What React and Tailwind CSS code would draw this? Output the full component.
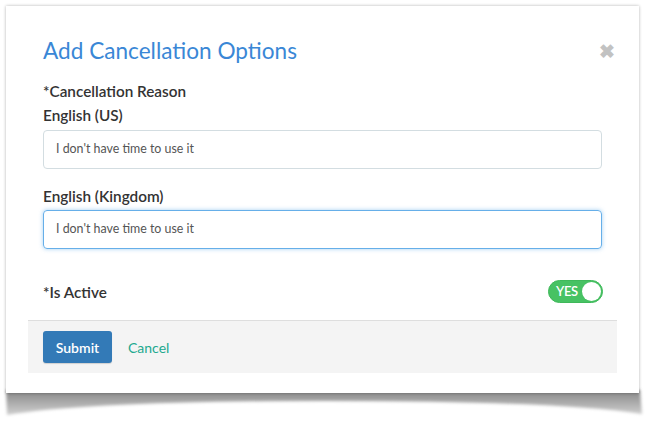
import React from "react";

function CurlShadow() {
  return (
    <svg
      className="absolute left-0 top-[380px] pointer-events-none"
      width="653"
      height="43"
      viewBox="0 0 653 43"
    >
      <defs>
        <linearGradient id="sg" x1="0" y1="0" x2="0" y2="1">
          <stop offset="0" stopColor="#858585" />
          <stop offset="1" stopColor="#d0d0d0" />
        </linearGradient>
        <filter id="bl" x="-5%" y="-50%" width="110%" height="200%">
          <feGaussianBlur stdDeviation="1.5" />
        </filter>
      </defs>
      <path
        d="M6 10 L640 10 L642 34 Q560 21 326 21 Q90 21 7 35 Z"
        fill="url(#sg)"
        filter="url(#bl)"
      />
    </svg>
  );
}

function Label({ children, className = "" }) {
  return (
    <div className={`text-[15.3px] leading-[22px] font-semibold text-[#333] ${className}`}>
      {children}
    </div>
  );
}

export default function App() {
  return (
    <div
      className="relative w-[653px] h-[423px] bg-white overflow-hidden pt-[6px] pl-[6px]"
      style={{ fontFamily: "Lato, 'Open Sans', sans-serif" }}
    >
      <CurlShadow />
      <div className="relative z-10 w-[633px] h-[387px] bg-white shadow-[0_0_3px_rgba(0,0,0,0.3)] flex flex-col">
        <button className="absolute right-[24px] top-[35px] text-[#c2c2c2] text-[19px] font-bold leading-none">
          ✖
        </button>
        <div className="px-[37px] pt-[30px]">
          <h1 className="text-[22.6px] leading-[30px] text-[#3a87d6] font-normal">
            Add Cancellation Options
          </h1>
          <Label className="mt-[14px]">*Cancellation Reason</Label>
          <Label className="mt-[2px]">English (US)</Label>
          <div className="mt-[4px] h-[39px] w-[559px] rounded-[4px] border border-[#d3dde1] flex items-center px-[12px] text-[12.4px] text-[#555]">
            I don't have time to use it
          </div>
          <Label className="mt-[16px]">English (Kingdom)</Label>
          <div className="mt-[3px] h-[39px] w-[559px] rounded-[4px] border border-[#66afe9] shadow-[0_0_4px_rgba(102,175,233,0.6)] flex items-center px-[12px] text-[12.4px] text-[#555]">
            I don't have time to use it
          </div>
          <div className="mt-[31px] flex items-center justify-between w-[560px]">
            <Label>*Is Active</Label>
            <div className="h-[23px] w-[55px] rounded-full bg-[#47c263] border border-[#3fb85a] flex items-center justify-between pl-[7px] pr-[1px]">
              <span className="text-white text-[13px] font-semibold tracking-tight">YES</span>
              <span className="h-[19px] w-[19px] rounded-full bg-white"></span>
            </div>
          </div>
        </div>
        <div className="mt-[17px] mx-[22px] h-[53px] bg-[#f4f4f4] border-t border-[#dedede] flex items-center px-[15px] gap-[16px]">
          <button className="h-[32px] w-[69px] rounded-[3px] bg-[#337ab7] text-white text-[14px] font-semibold shadow-[0_1px_1px_rgba(0,0,0,0.15)]">
            Submit
          </button>
          <span className="text-[14px] text-[#22a98f]">Cancel</span>
        </div>
      </div>
    </div>
  );
}
